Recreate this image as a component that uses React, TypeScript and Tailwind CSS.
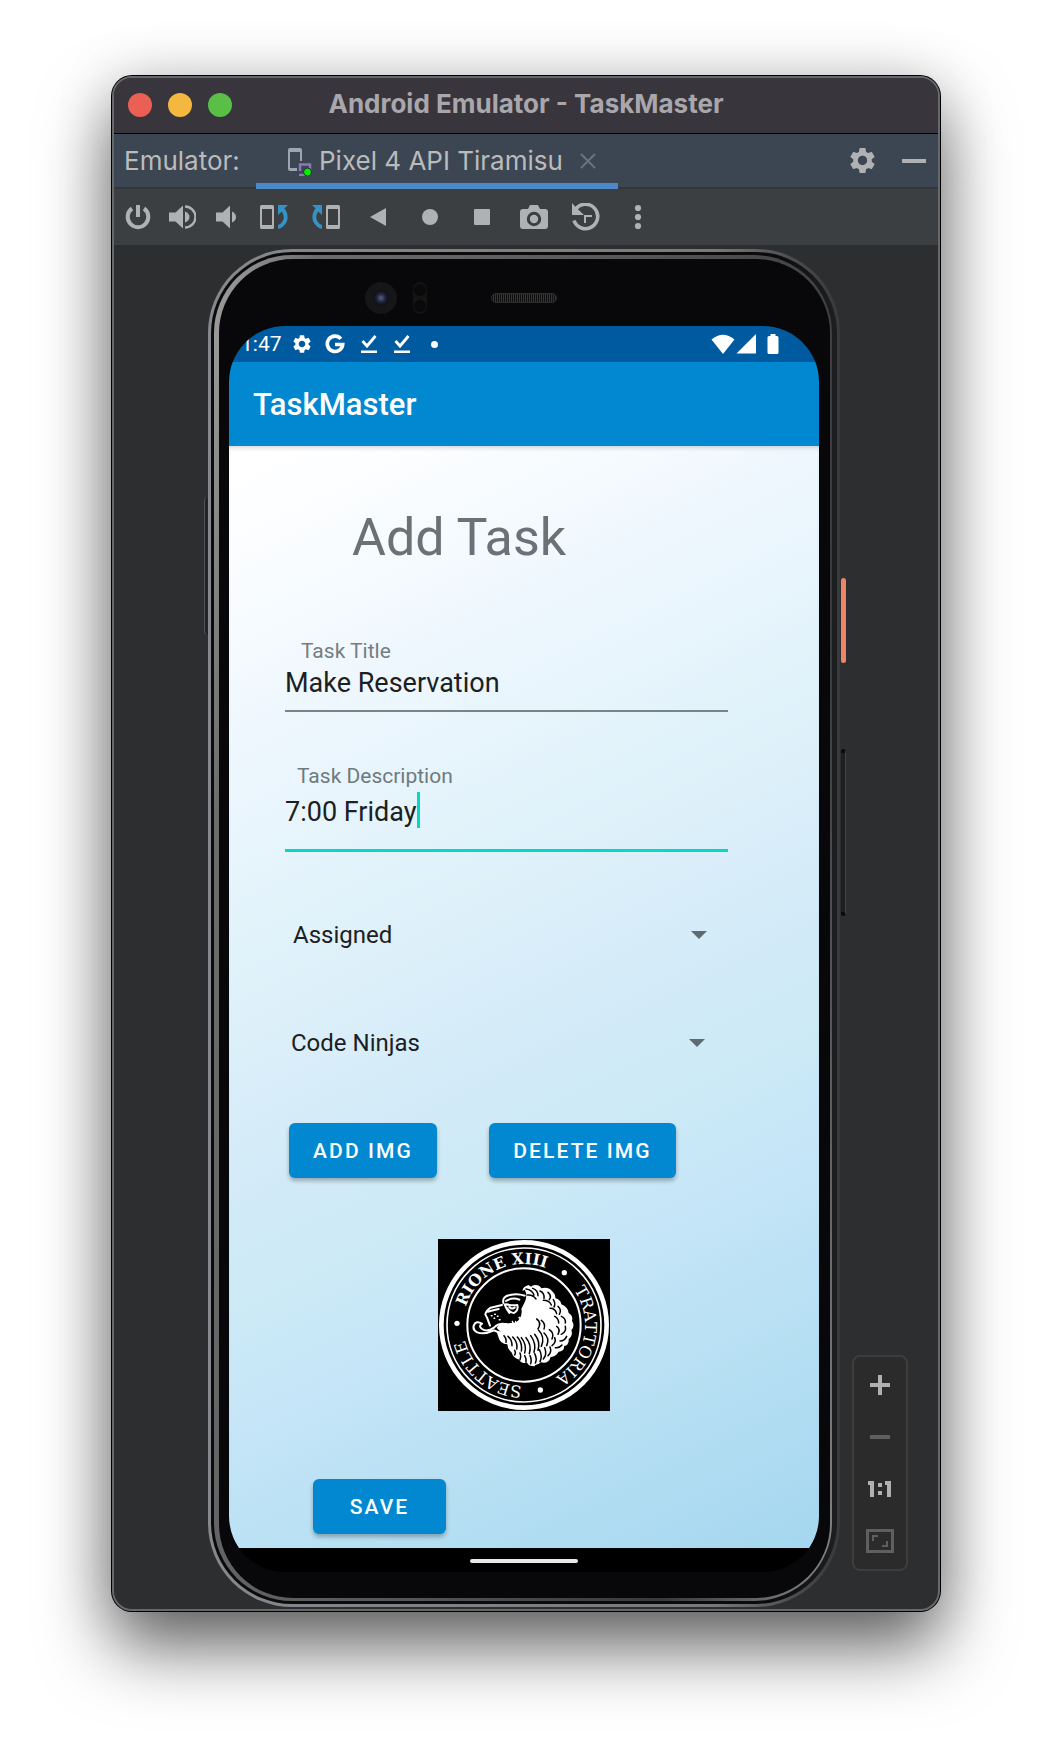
import React from "react";
import { MdSettings } from "react-icons/md";

type IconButtonProps = {
  label: string;
  wide?: boolean;
  children: React.ReactNode;
};

function ToolButton({ label, wide = true, children }: IconButtonProps) {
  return (
    <button
      type="button"
      aria-label={label}
      className={`flex h-14 items-center justify-center text-[#afb1b3] ${wide ? "w-13" : "w-11"}`}
    >
      <svg width="28" height="28" viewBox="0 0 28 28" fill="currentColor" aria-hidden="true">
        {children}
      </svg>
    </button>
  );
}

function Toolbar() {
  return (
    <div className="flex h-14 items-center bg-[#3c3f41] pl-0.5" role="toolbar" aria-label="Device controls">
      <ToolButton label="Power" wide={false}>
        <path d="M12 2h4v12h-4z" />
        <path d="M8 5.500a10.300 10.300 0 1 0 12 0" fill="none" stroke="currentColor" strokeWidth="4" />
      </ToolButton>
      <ToolButton label="Volume up" wide={false}>
        <path d="M1 9.500h6.500L15 2.500v23L7.500 18.500H1z" />
        <path d="M17 8.500q4.500 2 4.500 5.500t-4.500 5.500z" />
        <path d="M17 3.500a10.500 10.500 0 0 1 0 21" fill="none" stroke="currentColor" strokeWidth="2.400" />
      </ToolButton>
      <ToolButton label="Volume down" wide={false}>
        <path d="M4 9.500h6.500L18 2.500v23L10.500 18.500H4z" />
        <path d="M20 8.500q4 2 4 5.500t-4 5.500z" />
      </ToolButton>
      <ToolButton label="Rotate left">
        <path fillRule="evenodd" d="M1.500 2h11q1.500 0 1.500 1.500v21q0 1.500-1.500 1.500h-11Q0 26 0 24.500v-21Q0 2 1.500 2zM2 6v16h10V6z" />
        <path d="M18 2h10l-3.500 3.200c6 8 3 18-6.500 20.800v-4c6-2.500 7.500-8.500 3.700-13.600L18 12z" fill="#3592c4" />
      </ToolButton>
      <ToolButton label="Rotate right">
        <path fillRule="evenodd" d="M15.500 2h11Q28 2 28 3.500v21q0 1.500-1.500 1.500h-11q-1.500 0-1.500-1.500v-21Q14 2 15.500 2zM16 6v16h10V6z" />
        <path d="M10 2H0l3.500 3.200C-2.500 13.200.5 23.200 10 26v-4C4 19.500 2.500 13.500 6.300 8.400L10 12z" fill="#3592c4" />
      </ToolButton>
      <ToolButton label="Back">
        <path d="M6 14l16-9v18z" />
      </ToolButton>
      <ToolButton label="Home">
        <circle cx="14" cy="14" r="8" />
      </ToolButton>
      <ToolButton label="Overview">
        <rect x="6" y="6" width="16" height="16" rx="1" />
      </ToolButton>
      <ToolButton label="Take screenshot">
        <path
          fillRule="evenodd"
          d="M3 6h5l2-4h8l2 4h5q3 0 3 3v14q0 3-3 3H3q-3 0-3-3V9q0-3 3-3zM14 8.800a7.200 7.200 0 1 0 0 14.400a7.200 7.200 0 0 0 0-14.400z"
        />
        <circle cx="14" cy="16" r="4.200" />
      </ToolButton>
      <ToolButton label="Snapshots">
        <path d="M0 0l3.500 4L12 12H0z" />
        <path d="M3.500 6.500A12.200 12.200 0 1 1 2 17.500" fill="none" stroke="currentColor" strokeWidth="3.600" />
        <path d="M12 12h8v2h-6v6h-2z" />
      </ToolButton>
      <ToolButton label="More">
        <circle cx="14" cy="5" r="3.100" />
        <circle cx="14" cy="14" r="3.100" />
        <circle cx="14" cy="23" r="3.100" />
      </ToolButton>
    </div>
  );
}

function TabBar() {
  return (
    <div className="flex h-[55px] items-stretch border-b-2 border-[#343638] bg-[#3c4653] pl-2.5 text-[26px] text-[#bbbbbb]">
      <span className="flex w-[132px] items-center">Emulator:</span>
      <div className="relative flex w-[362px] items-center pl-[31px]">
        <svg width="28" height="30" viewBox="0 0 28 30" fill="none" aria-hidden="true">
          <path d="M10 25H3q-2 0-2-2V4q0-2 2-2h10q2 0 2 2v11h-2V6H3v16h7z" fill="#9aa7b0" />
          <path d="M13 25v-6.500h10V25M12 29h8" stroke="#8f76b8" strokeWidth="2.500" />
          <circle cx="20.500" cy="26" r="4" fill="#00f000" stroke="#1d3326" strokeWidth="1" />
        </svg>
        <span className="ml-1 flex-1 whitespace-nowrap">Pixel 4 API Tiramisu</span>
        <button type="button" aria-label="Close tab" className="mr-5 p-0.5 text-[#6a7581]">
          <svg width="16" height="16" viewBox="0 0 16 16" stroke="currentColor" strokeWidth="1.800" aria-hidden="true">
            <path d="M1 1l14 14M15 1L1 15" />
          </svg>
        </button>
        <div className="absolute inset-x-0 -bottom-0.5 h-1.5 bg-[#4a88c7]" />
      </div>
      <div className="ml-auto flex items-center gap-6 pr-3 text-[#afb1b3]">
        <button type="button" aria-label="Settings">
          <MdSettings size={31} />
        </button>
        <button type="button" aria-label="Hide" className="flex h-6 w-6 items-center">
          <span className="h-1 w-full bg-[#afb1b3]" />
        </button>
      </div>
    </div>
  );
}

function StatusBar() {
  return (
    <div className="flex h-9 items-center bg-[#005a9f] pr-10 pl-3 text-white">
      <span className="w-[50px] text-[21px] leading-9">1:47</span>
      <MdSettings size={22} />
      <svg width="20" height="20" viewBox="0 0 20 20" className="ml-3" fill="none" stroke="white" strokeWidth="3.600" aria-hidden="true">
        <path d="M15.900 4.800A7.700 7.700 0 1 0 17.700 10.500H10" />
      </svg>
      {[0, 1].map((i) => (
        <svg key={i} width="18" height="20" viewBox="0 0 18 20" className="ml-[15px]" aria-hidden="true">
          <path d="M2.500 7l4.500 5L15.500 2" fill="none" stroke="white" strokeWidth="2.800" />
          <path d="M1 16.500h16V19H1z" fill="white" />
        </svg>
      ))}
      <span className="ml-5 size-[7px] rounded-full bg-white" />
      <svg width="68" height="20" viewBox="0 0 68 20" fill="white" className="ml-auto" aria-hidden="true">
        <path d="M12 20L.5 5.500Q12-4 23.500 5.500z" />
        <path d="M45 0v19.500H25.500z" />
        <path d="M58 2h1.500V0h5v2H66q1.500 0 1.500 1.500v15q0 1.500-1.500 1.500h-8q-1.500 0-1.500-1.500v-15Q56.500 2 58 2z" />
      </svg>
    </div>
  );
}

function Spinner({ id, label, options, className }: { id: string; label: string; options: string[]; className: string }) {
  return (
    <div className={`relative flex h-12 items-center ${className}`}>
      <select
        id={id}
        aria-label={label}
        defaultValue={options[0]}
        className="h-full w-full appearance-none bg-transparent text-2xl text-[#1c2022] outline-none"
      >
        {options.map((o) => (
          <option key={o}>{o}</option>
        ))}
      </select>
      <svg width="16" height="8" viewBox="0 0 16 8" className="pointer-events-none absolute right-0" fill="#5d6c73" aria-hidden="true">
        <path d="M0 0h16L8 8z" />
      </svg>
    </div>
  );
}

function MaterialButton({ children, className }: { children: React.ReactNode; className: string }) {
  return (
    <button
      type="button"
      className={`h-[55px] rounded-md bg-[#0288d1] pt-0.5 text-[21px] font-medium tracking-widest whitespace-nowrap text-white shadow-[0_3px_4px_rgba(0,0,0,0.28)] ${className}`}
    >
      {children}
    </button>
  );
}

function RestaurantLogo() {
  return (
    <svg viewBox="0 0 516 516" className="block size-[172px] bg-black" role="img" aria-label="Rione XIII Trattoria Seattle">
      <defs>
        <path id="ring" d="M75 258a183 183 0 0 1 366 0a183 183 0 0 1-366 0" />
      </defs>
      <g fill="none" stroke="white">
        <circle cx="258" cy="258" r="248" strokeWidth="14" />
        <circle cx="258" cy="258" r="231" strokeWidth="5" />
        <circle cx="258" cy="258" r="170" strokeWidth="6" />
      </g>
      <g fill="white" fontFamily="'DejaVu Serif', serif" textAnchor="middle">
        <text fontSize="47" fontWeight="700">
          <textPath href="#ring" startOffset="17.800%">RIONE XIII</textPath>
        </text>
        <text fontSize="49">
          <textPath href="#ring" startOffset="53.300%">TRATTORIA</textPath>
        </text>
        <text fontSize="49">
          <textPath href="#ring" startOffset="85.800%">SEATTLE</textPath>
        </text>
        <circle cx="379" cy="101" r="8" />
        <circle cx="307" cy="453" r="8" />
        <circle cx="57" cy="253" r="8" />
      </g>
      {/* mane */}
      <path
        fill="white"
        d="M254 156q-2-12 18-18q8 8 10 2q20-6 28 8q20-6 32 8q12 10 10 22q16 4 18 18q20 8 22 26q14 8 10 24q10 14-2 28q6 16-8 26q2 18-14 22q2 14-16 16q-8 14-24 16q-6 22-30 16q-6 8-16 8l-2 4q-18 0-22-10q-20 2-24-10q-20-6-22-20q-14-12-14-26q-22-2-26-20l-6-18q-8-8 2-16l38-10q20 2 28-12q10-14 6-30l10-20q10-22 0-38z"
      />
      {/* hair strands */}
      <g fill="none" stroke="black" strokeWidth="4.500" strokeLinecap="round">
        <path d="M264 150q18 2 24 18M284 148q16 6 16 22M306 156q14 6 12 22M268 168q16-2 26 12M330 160q12 10 4 22" />
        <path d="M316 184q18 0 24 14M346 182q8 12 2 22M336 208q16 0 20 16M360 202q12 12 4 24" />
        <path d="M370 232q14 6 12 20M350 232q12 6 12 20M382 262q4 16-12 24M356 262q12 8 4 24M386 292q-6 14-20 14" />
        <path d="M334 272q16 10 8 28M350 296q6 14-8 24M372 318q-8 10-20 8M318 282q18 16 8 38" />
        <path d="M302 274q20 20 8 48M336 324q6 16-6 26M320 326q8 20-4 34M290 286q18 22 10 48M304 332q10 18 2 36" />
        <path d="M278 290q18 24 10 50M290 344q8 16 2 28M264 296q18 22 10 48M276 350q6 14 2 24M250 296q18 24 10 46M260 350q6 10 4 20" />
        <path d="M238 294q16 18 12 42M246 342q4 10 0 20M224 294q16 16 12 36M210 292q12 10 12 28M198 290q8 8 6 20M230 334q4 8 0 14" />
        <path d="M296 240q16 10 4 30M310 244q14 10 8 26" />
      </g>
      {/* face outline */}
      <g fill="none" stroke="white" strokeWidth="6" strokeLinecap="round" strokeLinejoin="round">
        <path d="M196 192q-4-20 20-24q22-6 44 2M204 186q20-12 40-4" />
        <path d="M192 198l-34 8q-14 10-16 20l6 12l8 22M150 218q22-6 32-8" />
        <path d="M200 196q4 12 14 26M204 196q20 4 34 2q4 16-10 24q-14-2-20-14M214 204q8 8 16 2" />
        <path d="M272 212q-4-28 16-26q20 4 12 30q-8 20-22 14M288 198q-8 10 0 24" />
        <path d="M268 184l8-8M244 236q12 4 8 24" />
        <path d="M160 230h2M170 226h2M168 238h2M178 232h2M184 242h2" strokeWidth="4.500" />
      </g>
      {/* tongue */}
      <path
        d="M206 256q-22-6-38 10q-20 14-36 4q-12-8 0-16q-18-10-24 4q-6 14 10 22q20 8 50-6q14 8 30 6q24-6 8-24z"
        fill="black"
        stroke="white"
        strokeWidth="6"
        strokeLinejoin="round"
      />
      <path d="M176 266q12-16 26-14q18 2 20 18q-8 10-20 10q-14 2-26-14z" fill="white" />
      <path d="M222 246q10 14 4 30M232 246q8 14 2 28" fill="none" stroke="white" strokeWidth="4" />
    </svg>
  );
}

function TaskForm() {
  return (
    <form
      onSubmit={(e) => e.preventDefault()}
      className="flex flex-col bg-[linear-gradient(154deg,#ffffff_0%,#fdfeff_6%,#eef7fe_22%,#e0f2fa_38%,#d2eaf8_55%,#cdeaf6_62%,#c6e6f8_70%,#b9e0f3_82%,#a4d7f0_100%)] px-14 pt-[58px] pb-3.5 shadow-[inset_0_4px_4px_-2px_rgba(0,0,0,0.16)]"
    >
      <h1 className="ml-[67px] text-[52px] leading-[68px] text-[#6c7274]">Add Task</h1>

      <div className="mt-[65px] mr-[35px] flex flex-col">
        <label htmlFor="task-title" className="ml-4 text-[21px] leading-7 text-[#767d80]">
          Task Title
        </label>
        <input
          id="task-title"
          defaultValue="Make Reservation"
          className="h-[47px] border-b-2 border-[#7a8486] bg-transparent pb-2.5 text-[27px] leading-9 text-[#1c2022] outline-none"
        />
      </div>

      <div className="mt-[50px] mr-[35px] flex flex-col">
        <label htmlFor="task-description" className="ml-3 text-[21px] leading-7 text-[#6f7a7e]">
          Task Description
        </label>
        <div className="flex items-center border-b-[3px] border-[#03dac5] pt-0.5 pb-[21px]">
          <input
            id="task-description"
            defaultValue="7:00 Friday"
            className="field-sizing-content h-9 bg-transparent pt-1 text-[27px] leading-8 text-[#1c2022] outline-none"
          />
          <span className="h-9 w-[3px] bg-[#03dac5]" />
        </div>
      </div>

      <Spinner id="state" label="Task state" options={["Assigned", "New", "In progress", "Complete"]} className="mt-[59px] mr-14 ml-2" />
      <Spinner id="team" label="Team" options={["Code Ninjas"]} className="mt-15 mr-[58px] ml-1.5" />

      <div className="mt-14 ml-1 flex gap-13">
        <MaterialButton className="w-[148px]">ADD IMG</MaterialButton>
        <MaterialButton className="w-[187px]">DELETE IMG</MaterialButton>
      </div>

      <div className="mt-[61px] flex justify-center">
        <RestaurantLogo />
      </div>

      <div className="mt-17 ml-7 flex">
        <MaterialButton className="w-[133px]">SAVE</MaterialButton>
      </div>
    </form>
  );
}

function Phone() {
  return (
    <div className="relative min-w-0 flex-1">
      {/* side buttons */}
      <div className="absolute top-[329px] -right-1.5 h-[85px] w-[5px] rounded-sm bg-[#ee8468]" />
      <div className="absolute top-[500px] -right-1.5 h-[167px] w-[5px] rounded-sm border-y-4 border-r border-y-[#0c0c0d] border-r-[#404244] bg-[#1e1f20]" />
      <div className="absolute top-[248px] -left-1 h-[138px] w-1 rounded-l-sm border-l border-[#515355] bg-[#232425]" />

      <div className="rounded-[84px] bg-[linear-gradient(90deg,#85888c_0%,#77797d_80%,#48494b_94%,#38393b_100%)] p-[3px]">
        <div className="rounded-[81px] bg-[linear-gradient(90deg,#0b0b0c_0%,#0b0b0c_90%,#1c1d1f_99%)] py-[3px] pr-[5px] pl-[3px]">
          <div className="rounded-[78px] bg-[linear-gradient(100deg,#a0a0a0_0%,#6c6c6c_12%,#55565a_50%,#3a3a3c_80%,#808285_99%)] pt-1 pr-0.5 pb-[3px] pl-[5px]">
            <div className="rounded-[74px] bg-[#08070a] pr-[11px] pb-[26px] pl-2.5">
              <div className="grid h-[67px] grid-cols-[1fr_auto_1fr] items-center">
                <div className="mt-2.5 mr-16 flex items-center justify-end gap-4">
                  <span className="flex size-8 items-center justify-center rounded-full bg-[#161617]">
                    <span className="size-4 rounded-full bg-[radial-gradient(circle,#5b6180_0%,#1d2138_40%,#0a0a10_75%)]" />
                  </span>
                  <span className="flex h-8 w-3.5 flex-col items-center justify-between rounded-full bg-[#141415] py-0.5">
                    <span className="size-3 rounded-full bg-[#09090a]" />
                    <span className="size-3 rounded-full bg-[#09090a]" />
                  </span>
                </div>
                <span className="mt-2.5 h-2.5 w-[66px] rounded-full border border-[#2e2e2e] bg-[repeating-linear-gradient(90deg,#111111_0_1px,#343434_1px_2px)]" />
              </div>
              <div className="overflow-hidden rounded-[56px] bg-black">
                <StatusBar />
                <header className="flex h-21 items-center bg-[#0288d1] px-6 pt-0.5">
                  <h2 className="text-[31px] font-medium text-white">TaskMaster</h2>
                </header>
                <TaskForm />
                <div className="flex h-6 items-center justify-center pt-0.5">
                  <span className="h-1 w-27 rounded-sm bg-[#e8e8e8]" />
                </div>
              </div>
            </div>
          </div>
        </div>
      </div>
    </div>
  );
}

function ZoomPanel() {
  return (
    <aside className="mb-9 flex w-14 flex-col items-center gap-6 self-end rounded-lg border-2 border-[#3d3d3d] bg-[#2b2b2b] py-3.5 text-[#afb1b3]">
      <button type="button" aria-label="Zoom in" className="flex size-7 items-center justify-center">
        <svg width="20" height="20" viewBox="0 0 20 20" fill="currentColor" aria-hidden="true">
          <path d="M8 0h4v8h8v4h-8v8H8v-8H0V8h8z" />
        </svg>
      </button>
      <button type="button" aria-label="Zoom out" className="flex size-7 items-center justify-center">
        <span className="h-1 w-5 bg-[#5e6060]" />
      </button>
      <button type="button" aria-label="Actual size" className="flex size-7 items-center justify-center">
        <svg width="24" height="16" viewBox="0 0 24 16" fill="currentColor" aria-hidden="true">
          <path d="M0 0h6v16H2V4H0zM17 0h6v16h-4V4h-2zM10 2h4v4h-4zM10 10h4v4h-4z" />
        </svg>
      </button>
      <button type="button" aria-label="Fit to window" className="flex size-7 items-center justify-center">
        <svg width="28" height="24" viewBox="0 0 28 24" fill="none" stroke="#5e6060" aria-hidden="true">
          <path d="M1.500 1.500h25v21h-25z" strokeWidth="3" />
          <path d="M7 12V7h5M21 12v5h-5" strokeWidth="2" />
        </svg>
      </button>
    </aside>
  );
}

export default function App() {
  return (
    <main className="min-h-screen overflow-hidden bg-white px-28 pt-19 pb-[147px] font-[Inter,sans-serif]">
      <section className="overflow-hidden rounded-[20px] border-2 border-[#66686a] bg-[#2d2e30] shadow-[0_0_0_1px_#000000,0_36px_70px_rgba(0,0,0,0.6),0_0_60px_rgba(0,0,0,0.14)]">
        <div className="grid h-14 grid-cols-[1fr_auto_1fr] items-center border-b border-black bg-[#38363c]">
          <div className="ml-3.5 flex gap-4 pb-0.5">
            <button type="button" aria-label="Close window" className="size-6 rounded-full bg-[#ea6055]" />
            <button type="button" aria-label="Minimize window" className="size-6 rounded-full bg-[#f4b740]" />
            <button type="button" aria-label="Zoom window" className="size-6 rounded-full bg-[#59bf46]" />
          </div>
          <p className="pb-1 text-[26px] font-bold whitespace-nowrap text-[#a9a7ac]">Android Emulator - TaskMaster</p>
        </div>
        <TabBar />
        <Toolbar />
        <div className="flex gap-3 pt-1 pr-[30px] pb-0.5 pl-[94px] font-[Roboto,sans-serif]">
          <Phone />
          <ZoomPanel />
        </div>
      </section>
    </main>
  );
}
